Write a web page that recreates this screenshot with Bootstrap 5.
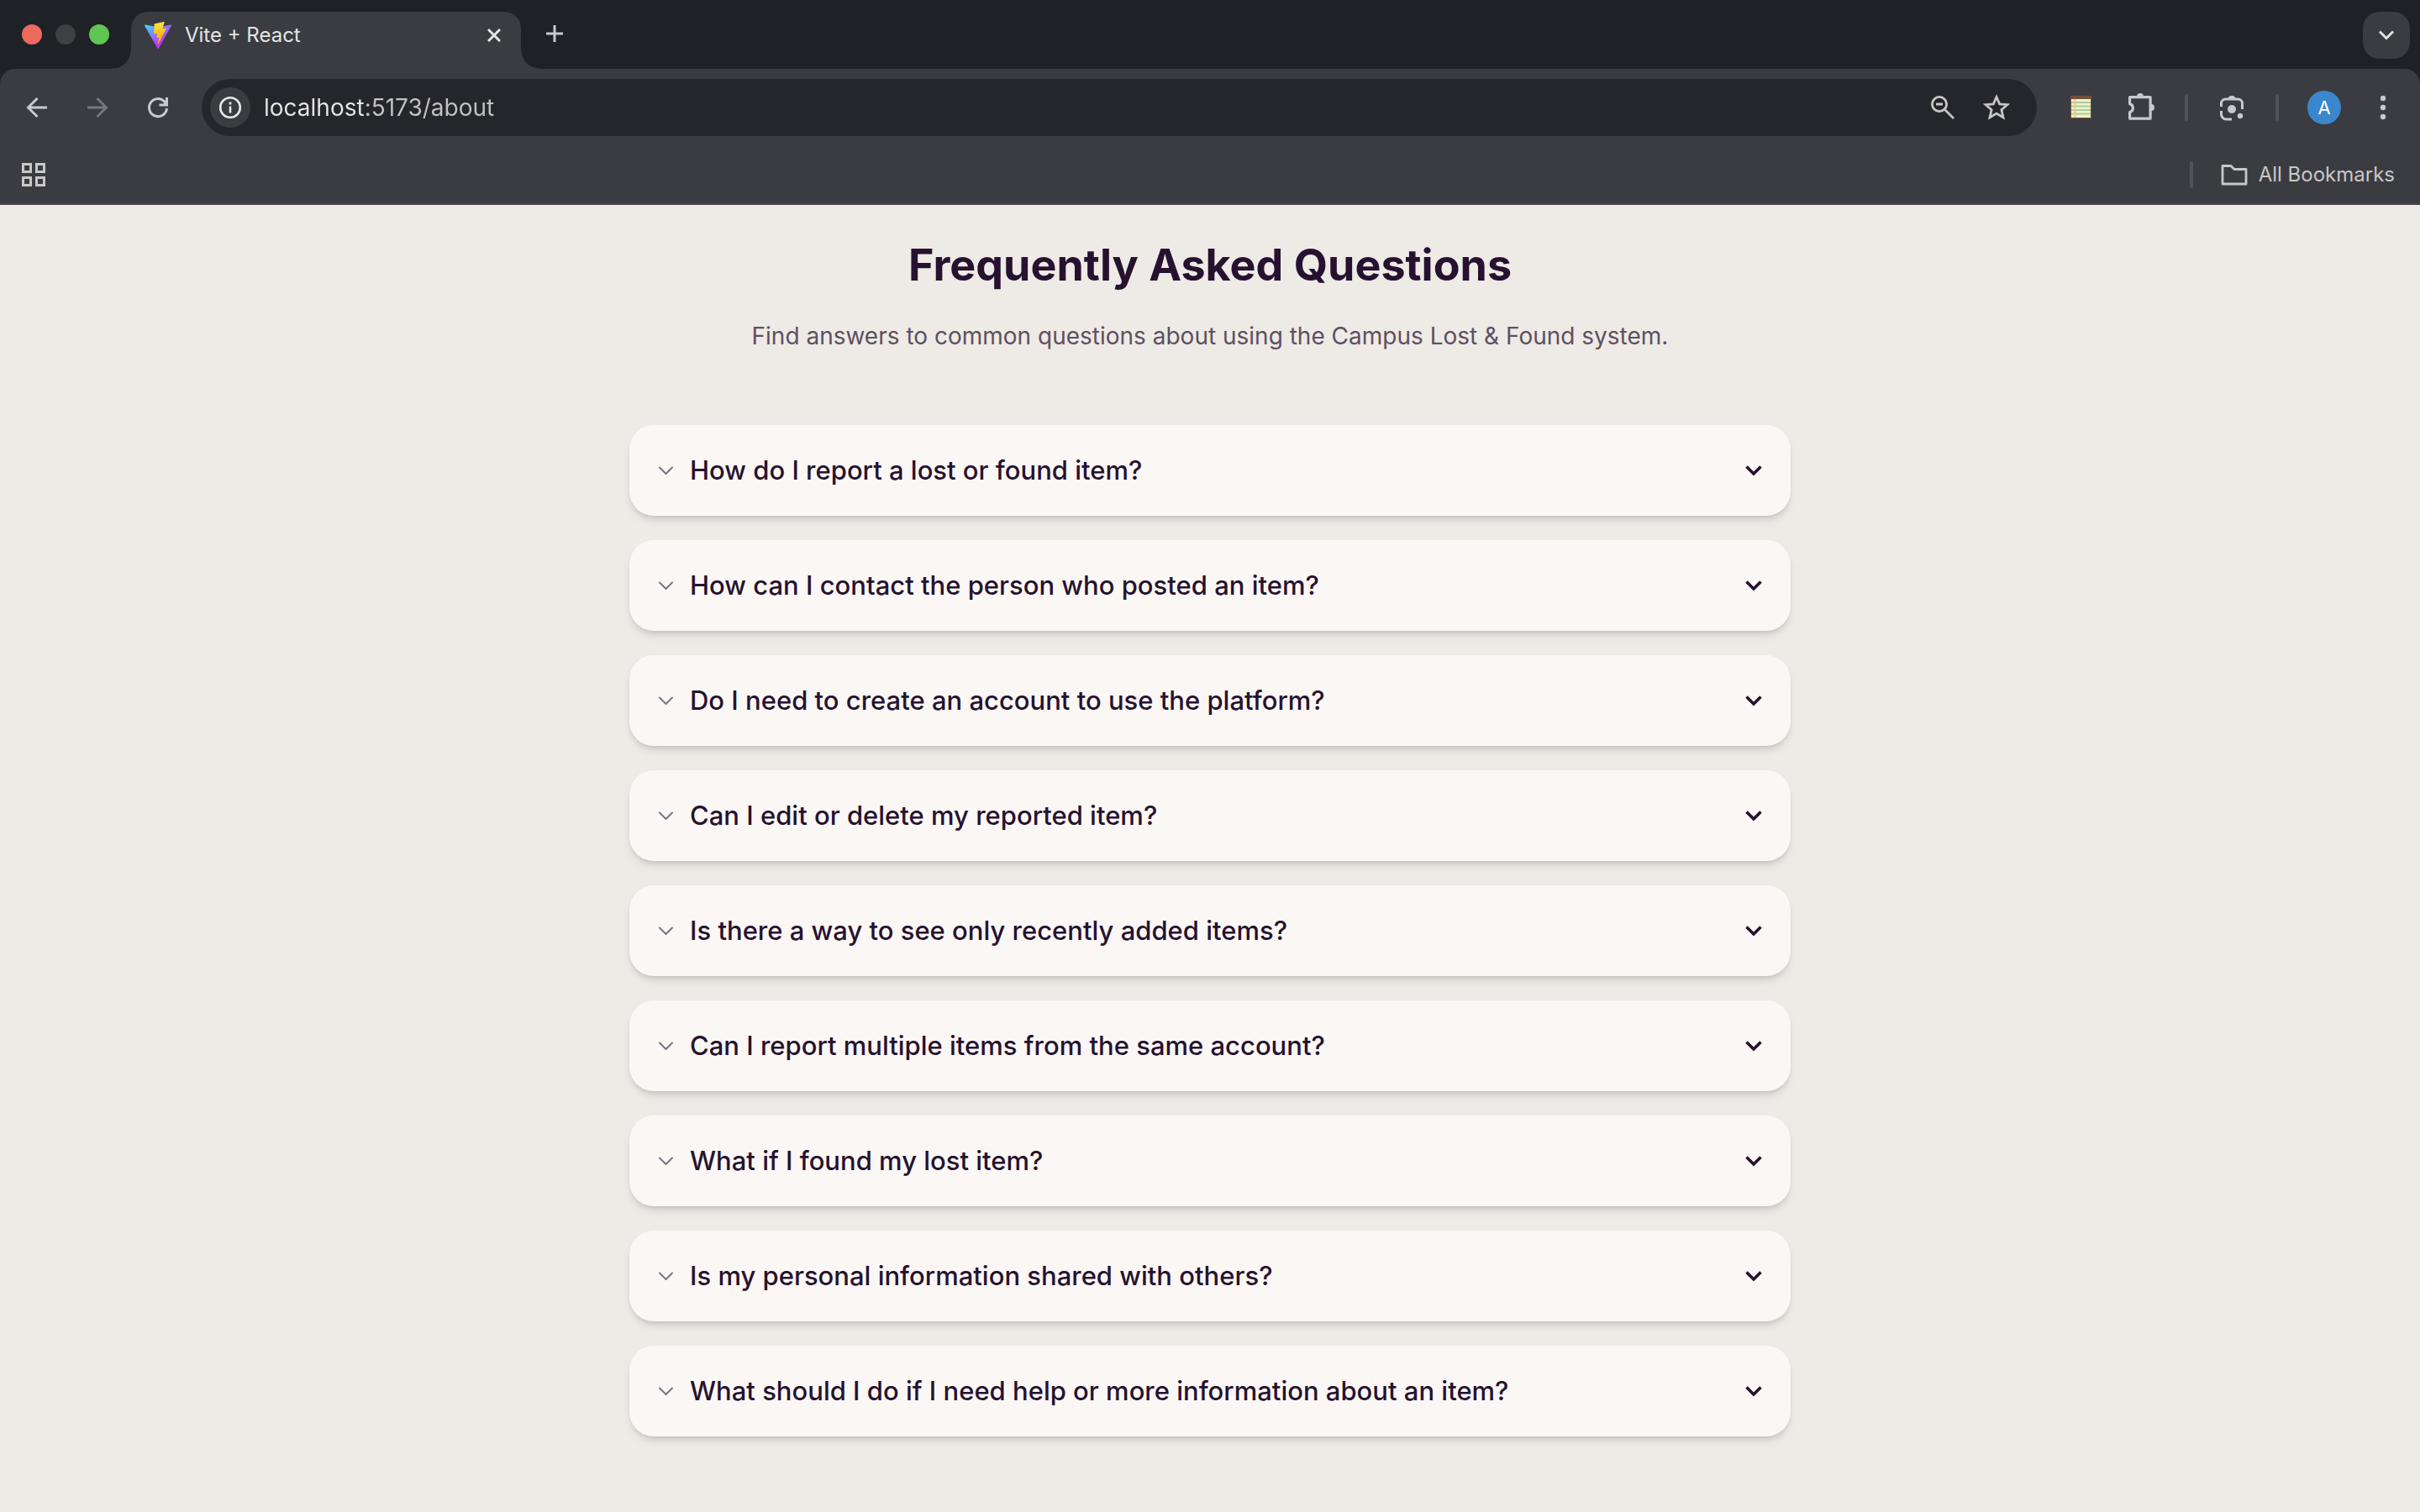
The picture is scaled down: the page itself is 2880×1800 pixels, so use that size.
<!DOCTYPE html>
<html lang="en">
<head>
<meta charset="utf-8">
<meta name="viewport" content="width=device-width, initial-scale=1">
<title>Vite + React</title>
<link href="https://cdn.jsdelivr.net/npm/bootstrap@5.3.0/dist/css/bootstrap.min.css" rel="stylesheet">
<style>
  body { background: #eeeae5; color: #261230; font-family: Inter, "Liberation Sans", sans-serif; min-height: 100vh; }
  button, input { font-family: inherit; }
  svg { display: block; flex: none; }

  /* browser frame */
  .frame { background: #1e2126; color: #c7c9d1; }
  .tab-strip { height: 82px; padding: 14px 12px 0 26px; }
  .lights { gap: 16px; height: 54px; width: 130px; }
  .light { width: 24px; height: 24px; border-radius: 50%; }
  .light-close { background: #ed6a5e; }
  .light-min { background: #3f4044; }
  .light-max { background: #61c554; }
  .tab-active { position: relative; width: 464px; height: 68px; padding: 0 24px 12px 16px; border-radius: 20px 20px 0 0; background: #3a3c42; color: #e5e4e5; }
  .tab-active::before, .tab-active::after { content: ""; position: absolute; bottom: 0; width: 22px; height: 22px; }
  .tab-active::before { right: 100%; background: radial-gradient(circle at 0 0, transparent 21px, #3a3c42 22px); }
  .tab-active::after { left: 100%; background: radial-gradient(circle at 100% 0, transparent 21px, #3a3c42 22px); }
  .tab-title { font-size: 24px; line-height: 32px; }
  .plain { background: none; border: 0; padding: 0; color: inherit; display: flex; align-items: center; justify-content: center; }
  .tab-new { height: 52px; margin-left: 30px; }
  .tab-search { width: 56px; height: 56px; border-radius: 20px; background: #3a3c42; color: #e5e4e5; }

  .tool-area { background: #3a3c42; border-radius: 18px 18px 0 0; border-bottom: 2px solid #4a474b; }
  .tool-row { height: 92px; padding: 0 28px; }
  .nav-set { gap: 40px; width: 212px; }
  .nav-off { color: #77787c; }
  .address { height: 68px; border-radius: 34px; background: #25262b; padding: 0 30px 0 10px; color: #c9c6c6; }
  .site-info { width: 48px; height: 48px; border-radius: 50%; background: #3a3c42; color: #e8e6e6; }
  .url { min-width: 0; border: 0; outline: 0; padding: 0; margin-left: 16px; font-size: 28px; line-height: 36px; background: linear-gradient(90deg, #e8e6e6 122px, #c4c2c2 122px); -webkit-background-clip: text; background-clip: text; color: transparent; }
  .address-tools { gap: 28px; }
  .ext-set { gap: 34px; padding-left: 36px; }
  .bar-rule { width: 4px; height: 32px; border-radius: 2px; background: #51535b; }
  .avatar-dot { width: 40px; height: 40px; border-radius: 50%; background: #3b87cd; color: #fff; font-size: 22px; line-height: 40px; }
  .mark-row { height: 68px; padding: 0 30px 0 24px; color: #c9c7c7; }
  .mark-text { font-size: 24px; line-height: 32px; margin-left: 12px; }

  /* page */
  .faq { max-width: 1382px; padding-top: 36px; }
  .faq-title { font-size: 52px; line-height: 72px; font-weight: 700; margin: 0 0 28px; }
  .faq-intro { font-size: 28px; line-height: 40px; color: #5d5063; margin: 0 0 86px; }
  .faq-list { gap: 29px; }
  .faq-item { width: 100%; height: 108px; border: 0; border-radius: 29px; padding: 0 32px; background: #fbf7f4; color: #261230; text-align: left;
    box-shadow: 0 7px 11px -2px rgba(0,0,0,.1), 0 4px 7px -4px rgba(0,0,0,.16); }
  .faq-text { font-size: 31px; line-height: 48px; font-weight: 500; margin-left: 18px; }
</style>
</head>
<body>
<header class="frame">
  <div class="tab-strip d-flex align-items-start">
    <div class="lights d-flex align-items-center">
      <span class="light light-close"></span><span class="light light-min"></span><span class="light light-max"></span>
    </div>
    <div class="tab-active d-flex align-items-center">
      <svg width="32" height="32" viewBox="0 0 256 257">
        <defs>
          <linearGradient id="tri" x1="-.8%" x2="57.6%" y1="7.7%" y2="78.4%"><stop offset="0" stop-color="#41D1FF"/><stop offset="1" stop-color="#BD34FE"/></linearGradient>
          <linearGradient id="bolt" x1="43.4%" x2="50.3%" y1="2.2%" y2="89%"><stop offset="0" stop-color="#FFEA83"/><stop offset=".083" stop-color="#FFDD35"/><stop offset="1" stop-color="#FFA800"/></linearGradient>
        </defs>
        <path fill="url(#tri)" d="M255.153 37.938L134.897 252.976c-2.483 4.44-8.862 4.466-11.382.048L.875 37.958c-2.746-4.814 1.371-10.646 6.827-9.67l120.385 21.517a6.537 6.537 0 0 0 2.322-.004l117.867-21.483c5.438-.991 9.574 4.796 6.877 9.62Z"/>
        <path fill="url(#bolt)" d="M185.432.063L96.44 17.501a3.268 3.268 0 0 0-2.634 3.014l-5.474 92.456a3.268 3.268 0 0 0 3.997 3.378l24.777-5.718c2.318-.535 4.413 1.507 3.936 3.838l-7.361 36.047c-.495 2.426 1.782 4.5 4.151 3.78l15.304-4.649c2.372-.72 4.652 1.36 4.15 3.788l-11.698 56.621c-.732 3.542 3.979 5.473 5.943 2.437l1.313-2.028l72.516-144.72c1.215-2.423-.88-5.186-3.54-4.672l-25.505 4.922c-2.396.462-4.435-1.77-3.759-4.114l16.646-57.705c.677-2.35-1.37-4.583-3.769-4.113Z"/>
      </svg>
      <span class="tab-title ms-3 me-auto">Vite + React</span>
      <button class="plain" aria-label="Close tab"><svg width="16" height="16" viewBox="0 0 16 16" stroke="currentColor" stroke-width="3"><path d="M1 1l14 14M15 1L1 15"/></svg></button>
    </div>
    <button class="plain tab-new" aria-label="New tab"><svg width="20" height="20" viewBox="0 0 20 20" stroke="currentColor" stroke-width="3"><path d="M10 0v20M0 10h20"/></svg></button>
    <button class="plain tab-search ms-auto" aria-label="Search tabs"><svg width="18" height="12" viewBox="0 0 18 12" fill="none" stroke="currentColor" stroke-width="3"><path d="M1 1.500l8 8 8-8"/></svg></button>
  </div>

  <div class="tool-area">
    <div class="tool-row d-flex align-items-center">
      <nav class="nav-set d-flex align-items-center">
        <button class="plain" aria-label="Back"><svg width="32" height="32" viewBox="0 0 32 32" fill="none" stroke="currentColor" stroke-width="3"><path d="M28 16H6M16.500 5L5.500 16l11 11"/></svg></button>
        <button class="plain nav-off" aria-label="Forward"><svg width="32" height="32" viewBox="0 0 32 32" fill="none" stroke="currentColor" stroke-width="3"><path d="M4 16h22M15.500 5l11 11-11 11"/></svg></button>
        <button class="plain" aria-label="Reload"><svg width="32" height="32" viewBox="0 0 32 32" fill="none" stroke="currentColor" stroke-width="3"><path d="M26.500 17A10.500 10.500 0 1 1 23.700 8.900L26.500 12"/><path d="M26.500 4v9h-9"/><path d="M27 7v6h-6z" fill="currentColor" stroke="none"/></svg></button>
      </nav>
      <div class="address d-flex align-items-center flex-grow-1">
        <button class="plain site-info" aria-label="Site information"><svg width="28" height="28" viewBox="0 0 28 28" fill="none" stroke="currentColor" stroke-width="2.600"><circle cx="14" cy="14" r="11.800"/><path d="M14 12.500v8M14 7.500v3"/></svg></button>
        <input class="url flex-grow-1" type="text" aria-label="Address" value="localhost:5173/about">
        <div class="address-tools d-flex align-items-center">
          <button class="plain" aria-label="Zoom"><svg width="36" height="32" viewBox="0 0 36 32" fill="none" stroke="currentColor" stroke-width="2.800"><circle cx="14" cy="12" r="8.600"/><path d="M20.500 18.500L31 29M10 12h8" /></svg></button>
          <button class="plain" aria-label="Bookmark this page"><svg width="36" height="36" viewBox="0 0 36 36" fill="none" stroke="currentColor" stroke-width="2.800"><path d="M18 5.500l3.700 8.400 9.200.8-7 6.100 2.100 9-8-4.700-8 4.700 2.100-9-7-6.100 9.200-.8z"/></svg></button>
        </div>
      </div>
      <div class="ext-set d-flex align-items-center">
        <button class="plain" aria-label="Notes extension"><svg width="32" height="32" viewBox="0 0 32 32"><path fill="#72503c" d="M4 2h25v27H4z"/><path fill="#f5f2c0" d="M5 6h23v22H5z"/><path stroke="#a5cda6" stroke-width="2" d="M5 10h23M5 14.500h23M5 19h23M5 23.500h23"/><path stroke="#f0c68c" stroke-width="2" d="M9.500 6v22"/></svg></button>
        <button class="plain ms-1" aria-label="Extensions"><svg width="36" height="36" viewBox="0 0 36 36"><path fill="none" stroke="currentColor" stroke-width="3.200" stroke-linejoin="round" d="M4.600 5.600h24.500v25.500H4.600v-7.500a5.200 5.200 0 0 0 0-10z"/><path fill="currentColor" d="M13 5a4 4 0 0 1 8 0zM30 14a4 4 0 0 1 0 8z"/></svg></button>
        <span class="bar-rule"></span>
        <button class="plain" aria-label="Search with Lens"><svg width="36" height="36" viewBox="0 0 36 36" fill="currentColor"><path fill="none" stroke="currentColor" stroke-width="3" d="M5.500 17v-4a5 5 0 0 1 5-5h15a5 5 0 0 1 5 5v7M5.500 22v4a6 6 0 0 0 6 6H18"/><path d="M13 7l3-3h4l3 3z"/><circle cx="18" cy="20" r="5"/><circle cx="28" cy="28" r="3.200"/></svg></button>
        <span class="bar-rule"></span>
        <button class="plain avatar-dot" aria-label="Profile">A</button>
        <button class="plain" aria-label="Menu"><svg width="32" height="32" viewBox="0 0 32 32" fill="currentColor"><circle cx="16" cy="5" r="3.200"/><circle cx="16" cy="16" r="3.200"/><circle cx="16" cy="27" r="3.200"/></svg></button>
      </div>
    </div>
    <div class="mark-row d-flex align-items-center">
      <button class="plain me-auto" aria-label="Apps"><svg width="32" height="32" viewBox="0 0 32 32" fill="none" stroke="currentColor" stroke-width="3"><path d="M3.500 3.500h9v9h-9zM19.500 3.500h9v9h-9zM3.500 19.500h9v9h-9zM19.500 19.500h9v9h-9z"/></svg></button>
      <span class="bar-rule me-4"></span>
      <button class="plain ms-2" aria-label="All Bookmarks"><svg width="34" height="28" viewBox="0 0 34 28" fill="none" stroke="currentColor" stroke-width="2.800" stroke-linejoin="round"><path d="M3 3.500h10l4 4h14v17.500H3z"/></svg><span class="mark-text">All Bookmarks</span></button>
    </div>
  </div>
</header>

<main class="faq container-fluid px-0">
  <h1 class="faq-title text-center">Frequently Asked Questions</h1>
  <p class="faq-intro text-center">Find answers to common questions about using the Campus Lost &amp; Found system.</p>
  <div class="faq-list d-flex flex-column" id="faq-list"></div>
</main>

<script src="https://cdn.jsdelivr.net/npm/bootstrap@5.3.0/dist/js/bootstrap.bundle.min.js"></script>
<script>
  const questions = [
    "How do I report a lost or found item?",
    "How can I contact the person who posted an item?",
    "Do I need to create an account to use the platform?",
    "Can I edit or delete my reported item?",
    "Is there a way to see only recently added items?",
    "Can I report multiple items from the same account?",
    "What if I found my lost item?",
    "Is my personal information shared with others?",
    "What should I do if I need help or more information about an item?"
  ];
  document.getElementById("faq-list").innerHTML = questions.map(q => `
    <button class="faq-item d-flex align-items-center" type="button" aria-expanded="false">
      <svg width="22" height="22" viewBox="0 0 22 22" fill="none" stroke="#7d7083" stroke-width="2" stroke-linecap="round" stroke-linejoin="round"><path d="M4 7.500l7.500 7.500L19 7.500"/></svg>
      <span class="faq-text me-auto">${q}</span>
      <svg width="24" height="24" viewBox="0 0 24 24" fill="none" stroke="#261230" stroke-width="3.600"><path d="M3.500 7.500l8.500 8.500L20.500 7.500"/></svg>
    </button>`).join("");
</script>
</body>
</html>
